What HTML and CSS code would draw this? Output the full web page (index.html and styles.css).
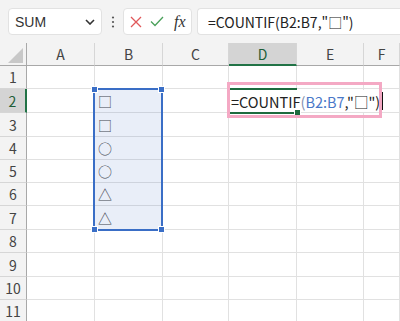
FILE: index.html
```html
<!DOCTYPE html>
<html lang="ja">
<head>
    <meta charset="UTF-8">
    <title>COUNTIF</title>
    <link rel="stylesheet" href="styles.css">
</head>
<body>
    <div class="toolbar">
        <div class="namebox">
            <span>SUM</span>
            <svg class="chev" width="10" height="6" viewBox="0 0 10 6"><path d="M1 1 L5 5 L9 1" fill="none" stroke="#333" stroke-width="1.6"/></svg>
        </div>
        <div class="dots">
            <svg width="4" height="12" viewBox="0 0 4 12"><circle cx="2" cy="1.5" r="1.1" fill="#555"/><circle cx="2" cy="6" r="1.1" fill="#555"/><circle cx="2" cy="10.5" r="1.1" fill="#555"/></svg>
        </div>
        <div class="fxbox">
            <svg width="12" height="12" viewBox="0 0 12 12"><path d="M1 1 L11 11 M11 1 L1 11" stroke="#e0585a" stroke-width="1.3"/></svg>
            <svg width="14" height="11" viewBox="0 0 14 11"><path d="M1 5.5 L5 9.5 L13 1" fill="none" stroke="#4aa05a" stroke-width="1.3"/></svg>
            <span class="fx">fx</span>
        </div>
        <div class="formula">=COUNTIF(B2:B7,"□")</div>
    </div>

    <div class="sheet">
        <div class="corner">
            <svg width="16" height="15" viewBox="0 0 16 15"><path d="M15 0 L15 15 L0 15 Z" fill="#c8c8c8"/></svg>
        </div>
        <div class="colhead">A</div>
        <div class="colhead">B</div>
        <div class="colhead">C</div>
        <div class="colhead active">D</div>
        <div class="colhead">E</div>
        <div class="colhead">F</div>

        <div class="rowhead">1</div><div class="cell"></div><div class="cell"></div><div class="cell"></div><div class="cell"></div><div class="cell"></div><div class="cell"></div>
        <div class="rowhead active">2</div><div class="cell"></div><div class="cell sym">□</div><div class="cell"></div><div class="cell"></div><div class="cell"></div><div class="cell"></div>
        <div class="rowhead">3</div><div class="cell"></div><div class="cell sym">□</div><div class="cell"></div><div class="cell"></div><div class="cell"></div><div class="cell"></div>
        <div class="rowhead">4</div><div class="cell"></div><div class="cell sym">○</div><div class="cell"></div><div class="cell"></div><div class="cell"></div><div class="cell"></div>
        <div class="rowhead">5</div><div class="cell"></div><div class="cell sym">○</div><div class="cell"></div><div class="cell"></div><div class="cell"></div><div class="cell"></div>
        <div class="rowhead">6</div><div class="cell"></div><div class="cell sym">△</div><div class="cell"></div><div class="cell"></div><div class="cell"></div><div class="cell"></div>
        <div class="rowhead">7</div><div class="cell"></div><div class="cell sym">△</div><div class="cell"></div><div class="cell"></div><div class="cell"></div><div class="cell"></div>
        <div class="rowhead">8</div><div class="cell"></div><div class="cell"></div><div class="cell"></div><div class="cell"></div><div class="cell"></div><div class="cell"></div>
        <div class="rowhead">9</div><div class="cell"></div><div class="cell"></div><div class="cell"></div><div class="cell"></div><div class="cell"></div><div class="cell"></div>
        <div class="rowhead">10</div><div class="cell"></div><div class="cell"></div><div class="cell"></div><div class="cell"></div><div class="cell"></div><div class="cell"></div>
        <div class="rowhead">11</div><div class="cell"></div><div class="cell"></div><div class="cell"></div><div class="cell"></div><div class="cell"></div><div class="cell"></div>

        <!-- range picked in the formula -->
        <div class="range">
            <span class="handle tl"></span><span class="handle tr"></span>
            <span class="handle bl"></span><span class="handle br"></span>
        </div>

        <!-- cell being edited -->
        <div class="editor">
            <span class="etext">=COUNTIF<span class="paren">(</span><span class="ref">B2:B7</span>,"□")<span class="caret"></span></span>
            <span class="fill"></span>
        </div>

        <div class="mark"></div>
    </div>
</body>
</html>
```

FILE: styles.css
```css
body {
    margin: 0;
    width: 400px;
    height: 321px;
    overflow: hidden;
    background: #fff;
    font-family: "Noto Sans CJK JP", "Noto Sans", sans-serif;
    color: #222;
}
.toolbar {
    height: 43px;
    box-sizing: border-box;
    padding: 8px 0 8px 8px;
    background: #f3f3f3;
    display: flex;
}
.namebox {
    width: 94px;
    box-sizing: border-box;
    background: #fff;
    border: 1px solid #e2e2e2;
    border-radius: 4px;
    display: flex;
    align-items: center;
    justify-content: space-between;
    padding: 0 6px;
    font-family: "Liberation Sans", Arial, sans-serif;
    font-size: 14px;
    color: #333;
}
.dots {
    width: 21px;
    display: flex;
    align-items: center;
    justify-content: center;
}
.fxbox {
    width: 69px;
    box-sizing: border-box;
    background: #fff;
    border: 1px solid #e2e2e2;
    border-radius: 4px;
    display: flex;
    align-items: center;
    gap: 8px;
    padding-left: 6px;
}
.fx {
    font-family: "Liberation Serif", serif;
    font-style: italic;
    font-size: 16px;
    color: #333;
    margin-left: 2px;
}
.formula {
    flex: 1;
    margin-left: 5px;
    background: #fff;
    border: 1px solid #e2e2e2;
    border-right: none;
    border-radius: 4px 0 0 4px;
    display: flex;
    align-items: center;
    padding-left: 10px;
    font-size: 14px;
    color: #222;
}
.sheet {
    position: relative;
    display: grid;
    grid-template-columns: 27px 68px 68px 66px 68px 67px 1fr;
    grid-template-rows: 23px 23px 24px 24px 23px 23px 23px 24px 23px 24px 23px 23px;
    background: #fff;
}
.corner {
    background: #f3f3f3;
    border-right: 1px solid #a8a8a8;
    border-bottom: 1px solid #a8a8a8;
    display: flex;
    align-items: flex-end;
    justify-content: flex-end;
    padding: 0 2px 2px 0;
    overflow: hidden;
}
.colhead {
    background: #f3f3f3;
    border-bottom: 1px solid #a8a8a8;
    border-right: 1px solid #d6d6d6;
    display: flex;
    align-items: center;
    justify-content: center;
    font-size: 14px;
    color: #444;
}
.colhead.active {
    background: #d4d4d4;
    border-bottom: 2px solid #217346;
    color: #1e5e38;
}
.rowhead {
    background: #f3f3f3;
    border-right: 1px solid #a8a8a8;
    border-bottom: 1px solid #d6d6d6;
    display: flex;
    align-items: center;
    justify-content: center;
    font-size: 14px;
    color: #444;
}
.rowhead.active {
    background: #d4d4d4;
    border-right: 2px solid #217346;
    color: #1e5e38;
}
.cell {
    border-right: 1px solid #e1e1e1;
    border-bottom: 1px solid #e1e1e1;
    min-width: 0;
}
.sym {
    display: flex;
    align-items: center;
    padding-left: 3px;
    font-size: 14px;
    color: #444;
}
/* overlays sit on their grid area without taking a slot */
.range {
    position: absolute;
    grid-column: 3 / 4;
    grid-row: 3 / 9;
    top: -1px;
    left: -2px;
    right: 0;
    bottom: -1px;
    border: 2px solid #3a6ec6;
    background: rgba(70, 115, 200, 0.12);
}
.handle {
    position: absolute;
    width: 5px;
    height: 5px;
    background: #3a6ec6;
    border: 1px solid #fff;
}
.handle.tl { left: -4px; top: -4px; }
.handle.tr { right: -4px; top: -4px; }
.handle.bl { left: -4px; bottom: -4px; }
.handle.br { right: -4px; bottom: -4px; }
.editor {
    position: absolute;
    grid-column: 5 / 6;
    grid-row: 3 / 4;
    top: -1px;
    left: -1px;
    right: 0;
    bottom: -1px;
    z-index: 2;
    border-left: 2px solid #1e6b3e;
    border-top: 2px solid #1e6b3e;
    border-bottom: 2px solid #1e6b3e;
    background: #fff;
}
.etext {
    position: absolute;
    left: 0;
    top: 0;
    bottom: 0;
    display: flex;
    align-items: center;
    padding: 0 2px 0 1px;
    background: #fff;
    white-space: nowrap;
    font-size: 14.5px;
    color: #222;
}
.paren { color: #7f8fb0; }
.ref { color: #4a78c8; }
.caret {
    width: 1px;
    height: 18px;
    background: #111;
    margin-left: 2px;
}
.fill {
    position: absolute;
    right: -4px;
    bottom: -4px;
    width: 5px;
    height: 5px;
    background: #1e6b3e;
    border: 1px solid #fff;
}
.mark {
    position: absolute;
    left: 227px;
    top: 39px;
    width: 155px;
    height: 36px;
    box-sizing: border-box;
    border: 3px solid #f4a9c4;
    z-index: 3;
}
```
